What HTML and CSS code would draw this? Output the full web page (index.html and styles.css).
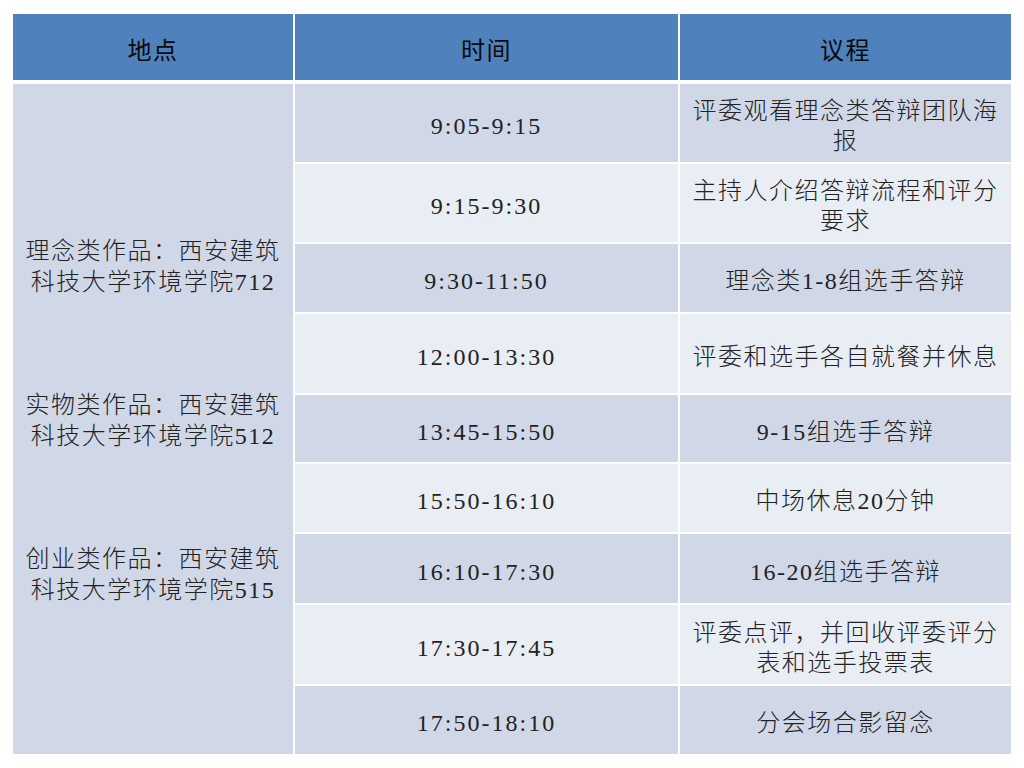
FILE: index.html
```html
<!DOCTYPE html>
<html lang="zh-CN">
<head>
<meta charset="utf-8">
<title>议程</title>
<link rel="stylesheet" href="styles.css">
</head>
<body>
<div class="schedule">
  <div class="cell head">地点</div>
  <div class="cell head">时间</div>
  <div class="cell head">议程</div>

  <div class="cell place">
    <p>理念类作品：西安建筑<br>科技大学环境学院712</p>
    <p>实物类作品：西安建筑<br>科技大学环境学院512</p>
    <p>创业类作品：西安建筑<br>科技大学环境学院515</p>
  </div>

  <div class="cell time dark r1">9:05-9:15</div>
  <div class="cell item dark r1">评委观看理念类答辩团队海报</div>

  <div class="cell time light r2">9:15-9:30</div>
  <div class="cell item light r2">主持人介绍答辩流程和评分要求</div>

  <div class="cell time dark r3">9:30-11:50</div>
  <div class="cell item dark r3">理念类1-8组选手答辩</div>

  <div class="cell time light r4">12:00-13:30</div>
  <div class="cell item light r4">评委和选手各自就餐并休息</div>

  <div class="cell time dark r5">13:45-15:50</div>
  <div class="cell item dark r5">9-15组选手答辩</div>

  <div class="cell time light r6">15:50-16:10</div>
  <div class="cell item light r6">中场休息20分钟</div>

  <div class="cell time dark r7">16:10-17:30</div>
  <div class="cell item dark r7">16-20组选手答辩</div>

  <div class="cell time light r8">17:30-17:45</div>
  <div class="cell item light r8">评委点评，并回收评委评分表和选手投票表</div>

  <div class="cell time dark r9">17:50-18:10</div>
  <div class="cell item dark r9">分会场合影留念</div>
</div>
</body>
</html>
```

FILE: styles.css
```css
html, body {
  margin: 0;
  padding: 0;
  background: #ffffff;
}

body {
  width: 1024px;
  height: 768px;
  overflow: hidden;
}

.schedule {
  margin: 14px 0 0 13px;
  width: 998px;
  display: grid;
  grid-template-columns: 280px 383px 331px;
  grid-template-rows: 68px 78px 78px 68px 79px 67px 68px 69px 79px 68px;
  column-gap: 2px;
  row-gap: 2px;
  font-family: "Liberation Serif", "Noto Sans CJK SC", serif;
  font-size: 24px;
  font-weight: 300;
  color: #222222;
}

.cell {
  display: flex;
  align-items: center;
  justify-content: center;
  text-align: center;
  letter-spacing: 1.5px;
  line-height: 30px;
  padding-top: 6px;
  box-sizing: border-box;
}

.head {
  background: #4f81bd;
  color: #0a0a0a;
  font-weight: 400;
  margin-bottom: 2px;
  padding-top: 8px;
}

.place {
  grid-column: 1;
  grid-row: 2 / span 9;
  background: #d0d8e8;
  flex-direction: column;
  gap: 92px;
  padding-top: 3px;
}

.place p {
  margin: 0;
  line-height: 31px;
}

.time {
  grid-column: 2;
  letter-spacing: 2px;
}

.item {
  grid-column: 3;
  padding-left: 12px;
  padding-right: 12px;
}

.dark { background: #d0d8e8; }
.light { background: #e9edf4; }

.r1 { grid-row: 2; }
.r2 { grid-row: 3; }
.r3 { grid-row: 4; }
.r4 { grid-row: 5; }
.r5 { grid-row: 6; }
.r6 { grid-row: 7; }
.r7 { grid-row: 8; }
.r8 { grid-row: 9; }
.r9 { grid-row: 10; }
```
